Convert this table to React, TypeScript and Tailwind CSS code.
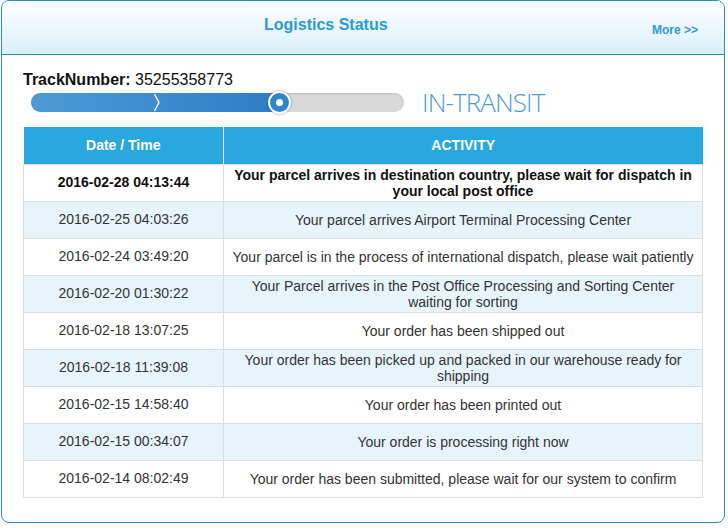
import React from 'react';

const ROWS = [
  { time: '2016-02-28 04:13:44', text: 'Your parcel arrives in destination country, please wait for dispatch in your local post office', bold: true },
  { time: '2016-02-25 04:03:26', text: 'Your parcel arrives Airport Terminal Processing Center' },
  { time: '2016-02-24 03:49:20', text: 'Your parcel is in the process of international dispatch, please wait patiently' },
  { time: '2016-02-20 01:30:22', text: 'Your Parcel arrives in the Post Office Processing and Sorting Center waiting for sorting' },
  { time: '2016-02-18 13:07:25', text: 'Your order has been shipped out' },
  { time: '2016-02-18 11:39:08', text: 'Your order has been picked up and packed in our warehouse ready for shipping' },
  { time: '2016-02-15 14:58:40', text: 'Your order has been printed out' },
  { time: '2016-02-15 00:34:07', text: 'Your order is processing right now' },
  { time: '2016-02-14 08:02:49', text: 'Your order has been submitted, please wait for our system to confirm' },
];

const ProgressBar = () => (
  <div className="flex items-center ml-[8px] mt-0">
    <div className="relative w-[373px] h-[19px] rounded-full bg-[#d8d8d8] shadow-[inset_0_1px_2px_rgba(0,0,0,0.12)]">
      <div className="absolute left-0 top-0 h-full w-[250px] rounded-l-full bg-gradient-to-r from-[#4c9bd6] to-[#2f7cc6]" />
      {/* chevron */}
      <svg className="absolute left-[122px] top-0" width="8" height="19" viewBox="0 0 8 19">
        <path d="M1.5 1 L6 9.5 L1.5 18" fill="none" stroke="#fff" strokeWidth="1.4" />
      </svg>
      {/* knob */}
      <div className="absolute left-[237px] top-[-2px] w-[23px] h-[23px] rounded-full bg-white shadow-[0_0_2px_rgba(0,0,0,0.5)] flex items-center justify-center">
        <div className="w-[19px] h-[19px] rounded-full bg-[#2f86cc] flex items-center justify-center">
          <div className="w-[7px] h-[7px] rounded-full bg-white" />
        </div>
      </div>
    </div>
    <span className="ml-[18px] text-[26px] leading-none font-light tracking-[-0.9px] text-[#4a9dd8] font-['Open_Sans',sans-serif]">
      IN-TRANSIT
    </span>
  </div>
);

export default function App() {
  return (
    <div className="w-[728px] h-[531px] bg-white font-['Liberation_Sans',Arial,sans-serif]">
      <div className="ml-px w-[724px] h-[523px] border border-[#2b8db3] rounded-[8px] overflow-hidden">
        {/* Header */}
        <div className="h-[54px] border-b border-[#2b8db3] bg-gradient-to-b from-white to-[#d9f0fb] flex items-start">
          <h2 className="pl-[262px] pt-[12px] text-[16px] font-bold text-[#2a9bd5]">Logistics Status</h2>
          <a className="ml-auto mr-[26px] mt-[20px] text-[12px] font-bold text-[#2a9bd5]">More &gt;&gt;</a>
        </div>

        <div className="pl-[21px] pr-[21px]">
          <div className="mt-[16px] text-[16px] leading-[18px] text-[#111]">
            <span className="font-bold">TrackNumber:</span> 35255358773
          </div>
          <ProgressBar />

          <table className="mt-[12px] w-[680px] border-collapse text-[14px] text-[#333] text-center">
            <thead>
              <tr className="h-[37px] bg-[#29a8e0] text-white">
                <th className="w-[200px] font-bold border-r border-[#e6f4fb]">Date / Time</th>
                <th className="font-bold">ACTIVITY</th>
              </tr>
            </thead>
            <tbody>
              {ROWS.map((r, i) => (
                <tr key={i} className={`h-[37px] ${i % 2 === 1 ? 'bg-[#e8f4fc]' : 'bg-white'}`}>
                  <td className={`border border-[#dddddd] ${r.bold ? 'font-bold text-[#111]' : ''}`}>{r.time}</td>
                  <td className={`border border-[#dddddd] px-[7px] leading-[16px] ${r.bold ? 'font-bold text-[#111]' : ''}`}>{r.text}</td>
                </tr>
              ))}
            </tbody>
          </table>
        </div>
      </div>
    </div>
  );
}
